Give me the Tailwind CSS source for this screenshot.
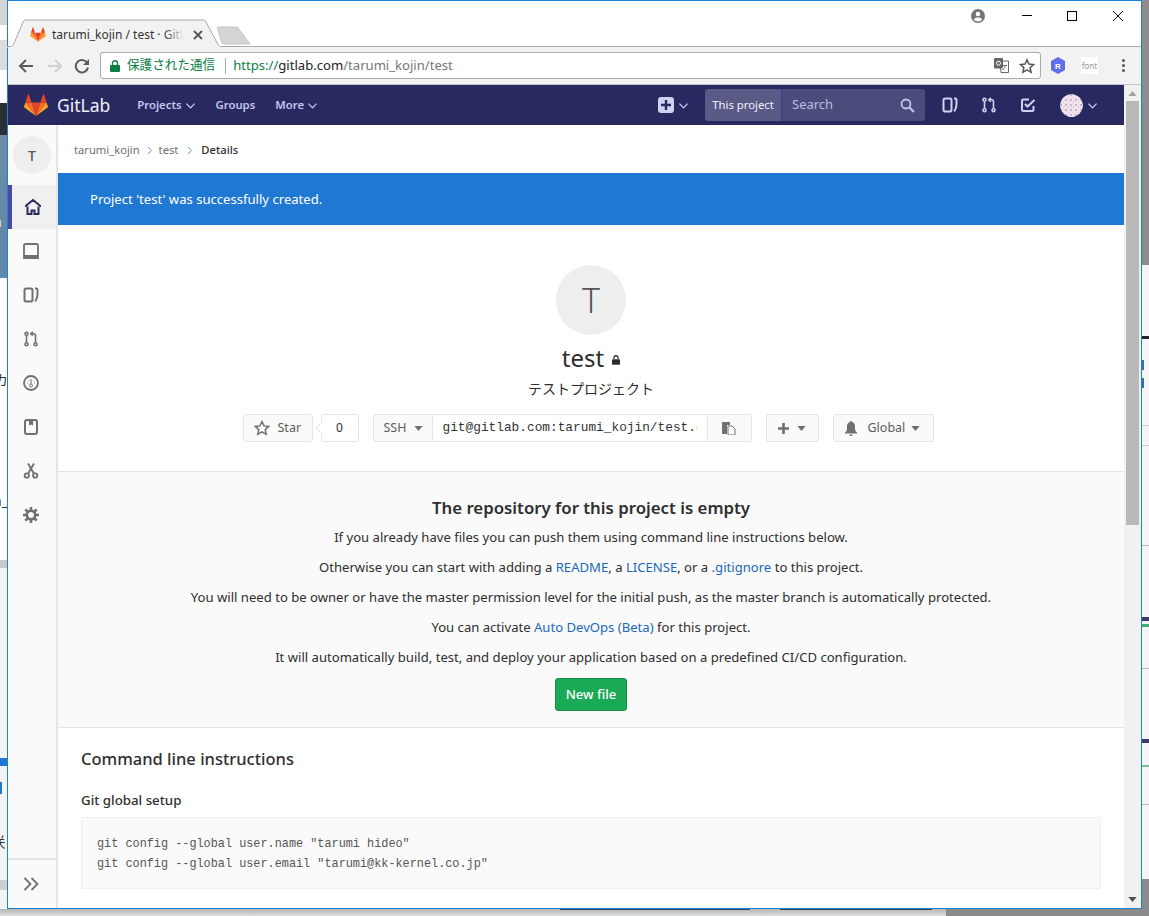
<!DOCTYPE html>
<html lang="ja">
<head>
    <meta charset="UTF-8">
    <title>tarumi_kojin / test · GitLab</title>
    <script src="https://cdn.jsdelivr.net/npm/@tailwindcss/browser@4"></script>
</head>
<body class="font-['Noto_Sans','Noto_Sans_CJK_JP',sans-serif] text-[#2e2e2e]">
    <svg class="hidden">
        <symbol id="i-boards" viewBox="0 0 16 16"><rect x="1.5" y="1.5" width="8" height="13" rx="1.8" fill="none" stroke="currentColor" stroke-width="2"/><path d="M12 1.5h1.2c.8 0 1.3.5 1.3 1.2v4.5c0 3-.8 5.2-2.3 7.3" fill="none" stroke="currentColor" stroke-width="2"/></symbol>
        <symbol id="i-merge" viewBox="0 0 16 16"><g fill="none" stroke="currentColor" stroke-width="1.6"><circle cx="3.5" cy="2.8" r="1.5"/><circle cx="3.5" cy="13.2" r="1.5"/><circle cx="12.5" cy="13.2" r="1.5"/><path d="M3.5 4.5v7M12.5 11.5V4.5c0-1-.6-1.7-1.6-1.7H8"/><path d="M9.8.8 7.8 2.8l2 2"/></g></symbol>
        <symbol id="i-todo" viewBox="0 0 16 16"><path d="M13.5 9v3.5c0 1-.6 1.5-1.5 1.5H3.5C2.6 14 2 13.500 2 12.500V4c0-1 .6-1.500 1.500-1.500H9" fill="none" stroke="currentColor" stroke-width="2"/><path d="m5 7 2.500 2.500L14.500 3" fill="none" stroke="currentColor" stroke-width="2"/></symbol>
        <symbol id="i-chev" viewBox="0 0 12 12"><path d="m1.500 4 4.500 4.500L10.500 4" fill="none" stroke="currentColor" stroke-width="1.300"/></symbol>
        <symbol id="i-caret" viewBox="0 0 10 6"><path d="M0 0h10L5 6z" fill="currentColor"/></symbol>
        <symbol id="i-tanuki" viewBox="0 0 24 22"><path d="M12 22 16.400 8.500H7.600z" fill="#e24329"/><path d="M12 22 7.600 8.500H1.400z" fill="#fc6d26"/><path d="M1.400 8.500.1 12.600c-.1.400 0 .8.300 1L12 22z" fill="#fca326"/><path d="M1.400 8.500h6.200L4.900.4c-.1-.4-.7-.4-.9 0z" fill="#e24329"/><path d="M12 22l4.400-13.500h6.200z" fill="#fc6d26"/><path d="m22.600 8.500 1.300 4.100c.1.400 0 .8-.3 1L12 22z" fill="#fca326"/><path d="M22.600 8.500h-6.200L19.100.4c.1-.4.7-.4.9 0z" fill="#e24329"/></symbol>
    </svg>

    <div class="relative w-[1149px] h-[916px] overflow-hidden bg-[#e8e8e8]">
        <!-- 背景の別ウィンドウ（左） -->
        <div class="absolute left-0 top-0 w-[8px] h-[916px] bg-white overflow-hidden text-[14px] leading-none text-[#333]">
            <div class="absolute left-0 top-0 w-full h-[25px] bg-[#d4d4d4]"></div>
            <div class="absolute left-0 top-[40px] w-full h-[30px] bg-[#dcdcdc]"></div>
            <div class="absolute left-0 top-[103px] w-full h-[32px] bg-[#2b2f33]"></div>
            <div class="absolute left-0 top-[135px] w-full h-[143px] bg-gradient-to-b from-[#6f8ba3] to-[#5f88aa]"></div>
            <div class="absolute left-0 top-[560px] w-full h-[8px] bg-[#c9c9c9]"></div>
            <div class="absolute left-0 top-[568px] w-full h-[340px] bg-[#f4f4f4]"></div>
            <div class="absolute left-0 top-[758px] w-full h-[8px] bg-[#1f78d1]"></div>
            <div class="absolute left-0 top-[782px] w-[2px] h-[12px] bg-[#1f78d1]"></div>
            <div class="absolute left-0 top-[880px] w-full h-[10px] bg-[#cfcfcf]"></div>
            <span class="absolute left-[-7px] top-[215px] text-white">n</span>
            <span class="absolute left-[-6px] top-[373px]">カ</span>
            <span class="absolute left-[-7px] top-[494px]">n_</span>
            <span class="absolute left-[-7px] top-[835px]">关</span>
        </div>
        <!-- 背景の別ウィンドウ（右） -->
        <div class="absolute left-[1142px] top-0 w-[7px] h-[916px] bg-[#f4f4f4] overflow-hidden">
            <div class="absolute left-0 top-0 w-full h-[265px] bg-[#8c8c8c]"></div>
            <div class="absolute left-0 top-[336px] w-full h-[3px] bg-[#222]"></div>
            <div class="absolute left-0 top-[360px] w-[2px] h-[10px] bg-[#3a6ea5]"></div>
            <div class="absolute left-0 top-[378px] w-[2px] h-[10px] bg-[#3a6ea5]"></div>
            <div class="absolute left-0 top-[425px] w-full h-px bg-[#ccc]"></div>
            <div class="absolute left-0 top-[445px] w-full h-px bg-[#ccc]"></div>
            <div class="absolute left-0 top-[545px] w-full h-px bg-[#bbb]"></div>
            <div class="absolute left-0 top-[617px] w-full h-[4px] bg-[#3b3b6d]"></div>
            <div class="absolute left-0 top-[624px] w-full h-[3px] bg-[#3fae6a]"></div>
            <div class="absolute left-0 top-[668px] w-full h-px bg-[#bbb]"></div>
            <div class="absolute left-0 top-[739px] w-full h-[4px] bg-[#3b3b6d]"></div>
            <div class="absolute left-0 top-[765px] w-full h-[2px] bg-[#6fc48f]"></div>
            <div class="absolute left-0 top-[804px] w-full h-px bg-[#bbb]"></div>
            <div class="absolute left-0 top-[879px] w-full h-[37px] bg-[#8a8a8a]"></div>
        </div>
        <!-- 下端 -->
        <div class="absolute left-0 top-[909px] w-[946px] h-[7px] bg-gradient-to-b from-[#b5b5b5] to-[#dedede]"></div>
        <div class="absolute left-[946px] top-[909px] w-[203px] h-[7px] bg-[#8a8a8a]"></div>
        <div class="absolute left-[560px] top-[909px] w-[190px] h-px bg-[#33475f]"></div>
        <div class="absolute left-[780px] top-[909px] w-[152px] h-px bg-[#3c4450]"></div>

        <!-- Chrome ウィンドウ -->
        <div class="absolute left-[7px] top-0 w-[1135px] h-[909px] border border-[#1883d7] bg-white flex flex-col">
            <!-- タイトルバー -->
            <div class="relative h-[46px] shrink-0 bg-white">
                <div class="absolute left-[212px] right-0 bottom-0 h-px bg-[#aaa]"></div>
                <svg class="absolute left-[-1px] top-[18px] w-[250px] h-[29px]" viewBox="0 0 250 29">
                    <path d="M0 28H3C5 28 6 27 7 25L16 3C17 1 18 1 20 1H195C197 1 198 1 199 3L213 28.500H0z" fill="#f2f2f2"/>
                    <path d="M0 27.500H3C5 27.500 6 26.500 7 24.500L16 3C17 1 18 1 20 1H195C197 1 198 1 199 3L212 27.500" fill="none" stroke="#aaa"/>
                    <path d="M210.500 9.500C210 8.500 210.500 8 211.500 8H229C230 8 231 8.500 231.500 9.500L243 25H217C216 25 215.500 24.500 215 24z" fill="#d4d4d4" stroke="#c4c4c4"/>
                </svg>
                <svg class="absolute left-[22px] top-[26px] w-[16px] h-[15px]"><use href="#i-tanuki"/></svg>
                <div class="absolute left-[44px] top-[26px] w-[132px] h-[16px] overflow-hidden whitespace-nowrap text-[12px] leading-[16px] text-[#333]">tarumi_kojin / test · GitLab</div>
                <div class="absolute left-[156px] top-[26px] w-[20px] h-[16px] bg-gradient-to-r from-transparent to-[#f2f2f2]"></div>
                <svg class="absolute left-[185px] top-[29px] w-[10px] h-[10px]" viewBox="0 0 10 10"><path d="m1 1 8 8M9 1l-8 8" stroke="#555" stroke-width="1.800"/></svg>
                <svg class="absolute left-[963px] top-[8px] w-[14px] h-[14px]" viewBox="0 0 14 14"><circle cx="7" cy="7" r="7" fill="#757575"/><circle cx="7" cy="5" r="2.300" fill="#fff"/><path d="M2.800 10.800C3.500 9 5 8.500 7 8.500s3.500.5 4.200 2.300C10 12 8.500 12.500 7 12.500s-3-.5-4.200-1.700z" fill="#fff"/></svg>
                <div class="absolute left-[1014px] top-[14px] w-[10px] h-px bg-black"></div>
                <div class="absolute left-[1059px] top-[10px] w-[10px] h-[10px] border border-black"></div>
                <svg class="absolute left-[1105px] top-[10px] w-[10px] h-[10px]" viewBox="0 0 10 10"><path d="m0 0 10 10M10 0 0 10" stroke="#000"/></svg>
            </div>
            <!-- ツールバー -->
            <div class="h-[38px] shrink-0 bg-[#f2f2f2] flex items-center pl-[10px] pr-[16px] border-b border-[#c4c4c4]">
                <svg class="w-[16px] h-[16px]" viewBox="0 0 16 16"><path d="M15 8H2M8 2 2 8l6 6" fill="none" stroke="#5a5a5a" stroke-width="2"/></svg>
                <svg class="w-[16px] h-[16px] ml-[13px]" viewBox="0 0 16 16"><path d="M1 8h13M8 2l6 6-6 6" fill="none" stroke="#d0d0d0" stroke-width="2"/></svg>
                <svg class="w-[16px] h-[16px] ml-[11px]" viewBox="0 0 16 16"><path d="M13.500 5.500A6.200 6.200 0 1 0 14 9.500" fill="none" stroke="#5a5a5a" stroke-width="2"/><path d="M15 1v6H9z" fill="#5a5a5a"/></svg>
                <div class="ml-[10px] w-[941px] h-[27px] bg-white border border-[#aaa] rounded-[3px] flex items-center pl-[9px] pr-[5px] text-[13.100px]">
                    <svg class="w-[10px] h-[12px]" viewBox="0 0 10 12"><path d="M2.500 5V3.200a2.500 2.500 0 0 1 5 0V5" fill="none" stroke="#0b8043" stroke-width="1.400"/><rect y="5" width="10" height="7" rx="1" fill="#0b8043"/></svg>
                    <span class="ml-[7px] text-[#0b8043] text-[12.600px]">保護された通信</span>
                    <span class="ml-[10px] w-px h-[16px] bg-[#aaa]"></span>
                    <span class="ml-[7px] text-[#0b8043]">https://</span><span class="text-[#222]">gitlab.com</span><span class="text-[#777]">/tarumi_kojin/test</span>
                    <svg class="ml-auto w-[15px] h-[15px]" viewBox="0 0 15 15"><path d="M6 3h8.500v11.500H7z" fill="#fff" stroke="#666"/><rect y="0" width="9" height="10.500" rx="1" fill="#666"/><circle cx="4.500" cy="5.200" r="2" fill="none" stroke="#fff"/><path d="M9 7.500h4M11 7v1.500c0 1.500-1 2.500-2.500 3" fill="none" stroke="#666"/></svg>
                    <svg class="ml-[10px] w-[16px] h-[16px]" viewBox="0 0 16 16"><path d="m8 1.800 1.900 4.300 4.600.5-3.400 3.100 1 4.600L8 11.900l-4.100 2.400 1-4.700-3.400-3.100 4.600-.5z" fill="none" stroke="#555" stroke-width="1.500"/></svg>
                </div>
                <svg class="ml-[9px] w-[16px] h-[17px]" viewBox="0 0 16 17"><path d="M8 0 15 4v9l-7 4-7-4V4z" fill="#5f6fe6"/><text x="8" y="11.500" font-size="8" font-weight="700" text-anchor="middle" fill="#fff" font-family="Liberation Sans, sans-serif">R</text></svg>
                <span class="ml-[15px] w-[17px] h-[17px] bg-white text-[8px] leading-[17px] text-[#999] text-center">font</span>
                <span class="ml-auto flex flex-col gap-[2px]">
                    <span class="w-[3px] h-[3px] rounded-full bg-[#555]"></span>
                    <span class="w-[3px] h-[3px] rounded-full bg-[#555]"></span>
                    <span class="w-[3px] h-[3px] rounded-full bg-[#555]"></span>
                </span>
            </div>
            <!-- ページ -->
            <div class="flex-1 min-h-0 flex">
                <div class="w-[1116px] flex flex-col min-h-0">
                    <!-- GitLab ナビ -->
                    <nav class="h-[40px] shrink-0 bg-[#292961] flex items-center pl-[16px] text-[#c5c5ec] text-[11.300px] font-semibold">
                        <svg class="w-[24px] h-[22px]"><use href="#i-tanuki"/></svg>
                        <span class="ml-[9px] text-[17.500px] font-normal text-[#f0f0fa]">GitLab</span>
                        <span class="ml-[27px] flex items-center gap-[3px]">Projects<svg class="w-[11px] h-[11px]"><use href="#i-chev"/></svg></span>
                        <span class="ml-[20px]">Groups</span>
                        <span class="ml-[20px] flex items-center gap-[3px]">More<svg class="w-[11px] h-[11px]"><use href="#i-chev"/></svg></span>
                        <div class="ml-auto flex items-center pr-[26px]">
                            <span class="w-[16px] h-[16px] rounded-[3px] bg-[#d1d1f0] flex items-center justify-center"><svg class="w-[10px] h-[10px]" viewBox="0 0 10 10"><path d="M5 0v10M0 5h10" stroke="#292961" stroke-width="2.400"/></svg></span>
                            <svg class="ml-[4px] w-[11px] h-[11px]"><use href="#i-chev"/></svg>
                            <div class="ml-[16px] w-[220px] h-[32px] rounded-[3px] overflow-hidden flex font-normal">
                                <span class="w-[77px] bg-[#5a5a87] text-[#f0f0fa] text-[11.300px] leading-[32px] text-center border-r border-[#3f3f90]">This project</span>
                                <span class="flex-1 bg-[#4b4b7c] flex items-center justify-between px-[10px] text-[#bdbde0] text-[13px]">Search
                                    <svg class="w-[15px] h-[15px]" viewBox="0 0 15 15"><circle cx="6" cy="6" r="4.500" fill="none" stroke="#c5c5ec" stroke-width="1.800"/><path d="m9.500 9.500 4.500 4.500" stroke="#c5c5ec" stroke-width="2.200"/></svg>
                                </span>
                            </div>
                            <svg class="ml-[17px] w-[16px] h-[16px] text-[#d1d1f0]"><use href="#i-boards"/></svg>
                            <svg class="ml-[23px] w-[16px] h-[16px] text-[#d1d1f0]"><use href="#i-merge"/></svg>
                            <svg class="ml-[23px] w-[16px] h-[16px] text-[#d1d1f0]"><use href="#i-todo"/></svg>
                            <svg class="ml-[24px] w-[23px] h-[23px] rounded-full" viewBox="0 0 23 23">
                                <defs><pattern id="identicon" width="5" height="5" patternUnits="userSpaceOnUse"><rect width="5" height="5" fill="#eee2ec"/><rect width="2" height="2" fill="#cfb2ce"/><rect x="3" y="3" width="1" height="1" fill="#d9c2d8"/></pattern></defs>
                                <circle cx="11.500" cy="11.500" r="11.500" fill="url(#identicon)"/>
                            </svg>
                            <svg class="ml-[4px] w-[11px] h-[11px]"><use href="#i-chev"/></svg>
                        </div>
                    </nav>
                    <div class="flex-1 min-h-0 flex overflow-hidden">
                        <!-- サイドバー -->
                        <aside class="w-[50px] shrink-0 bg-[#fafafa] border-r-2 border-[#e5e5e5] flex flex-col text-[#707070]">
                            <div class="h-[60px] flex items-center justify-center">
                                <span class="w-[38px] h-[38px] rounded-full bg-[#eeeeee] text-[#555] text-[14px] font-medium flex items-center justify-center">T</span>
                            </div>
                            <div class="h-[44px] bg-[#f0f0f0] border-l-4 border-[#4b4ba3] flex items-center justify-center pr-[2px] text-[#292961]">
                                <svg class="w-[16px] h-[16px]" viewBox="0 0 16 16"><path d="M0 7.500 8 1l8 6.500M2.500 7.500V15h4v-3.500h3V15h4V7.500" fill="none" stroke="currentColor" stroke-width="2"/></svg>
                            </div>
                            <div class="h-[44px] pr-[2px] flex items-center justify-center">
                                <svg class="w-[16px] h-[16px]" viewBox="0 0 16 16"><path d="M2.500 1h11c.8 0 1.500.7 1.500 1.500V15H1V2.500C1 1.700 1.700 1 2.500 1z" fill="none" stroke="currentColor" stroke-width="1.800"/><rect x="1" y="12" width="14" height="3" fill="currentColor"/></svg>
                            </div>
                            <div class="h-[44px] pr-[2px] flex items-center justify-center"><svg class="w-[16px] h-[16px]"><use href="#i-boards"/></svg></div>
                            <div class="h-[44px] pr-[2px] flex items-center justify-center"><svg class="w-[16px] h-[16px]"><use href="#i-merge"/></svg></div>
                            <div class="h-[44px] pr-[2px] flex items-center justify-center">
                                <svg class="w-[16px] h-[16px]" viewBox="0 0 16 16"><circle cx="8" cy="8" r="7" fill="none" stroke="currentColor" stroke-width="1.800"/><circle cx="8" cy="10.500" r="1.500" fill="none" stroke="currentColor"/><path d="M8 4v5M4 8h.8M11.200 8h.8M5.200 5.200l.5.500M10.800 5.200l-.5.500" stroke="currentColor"/></svg>
                            </div>
                            <div class="h-[44px] pr-[2px] flex items-center justify-center">
                                <svg class="w-[16px] h-[16px]" viewBox="0 0 16 16"><rect x="2" y="1" width="12" height="14" rx="2" fill="none" stroke="currentColor" stroke-width="2"/><path d="M6 1h4v5.500L8 5.500l-2 1z" fill="currentColor"/></svg>
                            </div>
                            <div class="h-[44px] pr-[2px] flex items-center justify-center">
                                <svg class="w-[16px] h-[16px]" viewBox="0 0 16 16"><g fill="none" stroke="currentColor" stroke-width="1.800"><circle cx="3.800" cy="12.500" r="2.200"/><circle cx="12.200" cy="12.500" r="2.200"/><path d="M5 10.800 11 .5M11 10.800 5 .5"/></g></svg>
                            </div>
                            <div class="h-[44px] pr-[2px] flex items-center justify-center">
                                <svg class="w-[16px] h-[16px]" viewBox="0 0 16 16"><circle cx="8" cy="8" r="4.200" fill="none" stroke="currentColor" stroke-width="2.600"/><path d="M8 0v3M8 13v3M0 8h3M13 8h3M2.300 2.300l2.200 2.200M11.500 11.500l2.200 2.200M13.700 2.300l-2.200 2.200M4.500 11.500l-2.200 2.200" stroke="currentColor" stroke-width="2.600"/></svg>
                            </div>
                            <div class="mt-auto h-[50px] border-t-2 border-[#e5e5e5] flex items-center justify-center pr-[2px]">
                                <svg class="w-[16px] h-[14px]" viewBox="0 0 16 14"><path d="m1.500 1 6 6-6 6M8.500 1l6 6-6 6" fill="none" stroke="currentColor" stroke-width="1.800"/></svg>
                            </div>
                        </aside>
                        <!-- メイン -->
                        <main class="flex-1 min-w-0 overflow-hidden text-[13.100px]">
                            <div class="h-[48px] pt-[2px] mx-[16px] flex items-center text-[11.200px] text-[#707070]">
                                tarumi_kojin
                                <svg class="mx-[5px] w-[9px] h-[9px] -rotate-90 text-[#888]"><use href="#i-chev"/></svg>
                                test
                                <svg class="mx-[7px] w-[9px] h-[9px] -rotate-90 text-[#888]"><use href="#i-chev"/></svg>
                                <span class="text-[#2e2e2e] font-medium">Details</span>
                            </div>
                            <div class="h-[52px] bg-[#1f78d1] text-white pl-[32px] leading-[52px]">Project 'test' was successfully created.</div>
                            <section class="h-[247px] pt-[40px] flex flex-col items-center border-b border-[#e5e5e5]">
                                <span class="w-[70px] h-[70px] rounded-full bg-[#eeeeee] text-[#555] text-[34px] font-light flex items-center justify-center">T</span>
                                <div class="mt-[8px] h-[30px] flex items-center text-[24px] leading-[30px]">test<svg class="ml-[8px] mt-[4px] w-[8px] h-[10px]" viewBox="0 0 10 12"><path d="M2.500 5V3.200a2.500 2.500 0 0 1 5 0V5" fill="none" stroke="#2e2e2e" stroke-width="1.600"/><rect y="5" width="10" height="7" rx="1" fill="#2e2e2e"/></svg></div>
                                <p class="mt-[3px] h-[26px] leading-[26px] text-[14px]">テストプロジェクト</p>
                                <div class="mt-[12px] mr-[6px] h-[28px] flex items-center text-[12.500px] text-[#5c5c5c]">
                                    <span class="h-[28px] w-[70px] bg-[#fafafa] border border-[#e5e5e5] rounded-[3px] flex items-center pl-[10px]">
                                        <svg class="w-[16px] h-[16px]" viewBox="0 0 16 16"><path d="m8 1.500 2 4.400 4.700.5-3.500 3.200 1 4.700L8 11.900l-4.200 2.400 1-4.700L1.300 6.400 6 5.900z" fill="none" stroke="#707070" stroke-width="1.500"/></svg>
                                        <span class="ml-[8px]">Star</span>
                                    </span>
                                    <span class="relative ml-[8px] h-[28px] w-[38px] bg-white border border-[#e5e5e5] rounded-[3px] text-center leading-[26px] text-[12px] text-[#2e2e2e]">0<span class="absolute left-[-5px] top-[9px] w-[8px] h-[8px] bg-white border-l border-b border-[#e5e5e5] rotate-45"></span></span>
                                    <span class="ml-[14px] h-[28px] w-[60px] bg-[#fafafa] border border-[#e5e5e5] rounded-l-[3px] flex items-center pl-[10px]">SSH<svg class="ml-[7px] w-[9px] h-[5px] text-[#707070]"><use href="#i-caret"/></svg></span>
                                    <span class="h-[28px] w-[274px] bg-white border-y border-[#e5e5e5] pl-[10px]">
                                        <span class="block w-[254px] overflow-hidden whitespace-nowrap font-['Liberation_Mono',monospace] text-[12.800px] leading-[26px] text-[#333]">git@gitlab.com:tarumi_kojin/test.git</span>
                                    </span>
                                    <span class="h-[28px] w-[45px] bg-[#fafafa] border border-[#e5e5e5] rounded-r-[3px] flex items-center justify-center">
                                        <svg class="w-[14px] h-[14px]" viewBox="0 0 14 14"><path d="M0 1h8v3H5v9H0z" fill="#707070"/><path d="M6 5h4l3 3v6H6z" fill="#fff" stroke="#707070"/></svg>
                                    </span>
                                    <span class="ml-[14px] h-[28px] w-[53px] bg-[#fafafa] border border-[#e5e5e5] rounded-[3px] flex items-center justify-center gap-[8px]">
                                        <svg class="w-[11px] h-[11px]" viewBox="0 0 11 11"><path d="M5.500 0v11M0 5.500h11" stroke="#707070" stroke-width="2.600"/></svg>
                                        <svg class="w-[9px] h-[5px] text-[#707070]"><use href="#i-caret"/></svg>
                                    </span>
                                    <span class="ml-[14px] h-[28px] w-[101px] bg-[#fafafa] border border-[#e5e5e5] rounded-[3px] flex items-center pl-[10px]">
                                        <svg class="w-[14px] h-[15px]" viewBox="0 0 14 15"><path d="M7 0c.7 0 1 .5 1 1 2 .5 3 2 3 4v3c0 1.500.8 2.500 2 3.500v1H1v-1C2.200 10.500 3 9.500 3 8V5c0-2 1-3.500 3-4 0-.5.300-1 1-1zM5.500 13.500h3c0 1-.7 1.500-1.500 1.500s-1.500-.5-1.500-1.500z" fill="#707070"/></svg>
                                        <span class="ml-[10px]">Global</span>
                                        <svg class="ml-[6px] w-[9px] h-[5px] text-[#707070]"><use href="#i-caret"/></svg>
                                    </span>
                                </div>
                            </section>
                            <section class="h-[256px] bg-[#fafafa] border-b border-[#e5e5e5] flex flex-col items-center pt-[23px]">
                                <h4 class="text-[16.800px] font-semibold leading-[26px] text-[#2e2e2e]">The repository for this project is empty</h4>
                                <p class="mt-px leading-[30px]">If you already have files you can push them using command line instructions below.</p>
                                <p class="leading-[30px]">Otherwise you can start with adding a <span class="text-[#1b69b6]">README</span>, a <span class="text-[#1b69b6]">LICENSE</span>, or a <span class="text-[#1b69b6]">.gitignore</span> to this project.</p>
                                <p class="leading-[30px]">You will need to be owner or have the master permission level for the initial push, as the master branch is automatically protected.</p>
                                <p class="leading-[30px]">You can activate <span class="text-[#1b69b6]">Auto DevOps (Beta)</span> for this project.</p>
                                <p class="leading-[30px]">It will automatically build, test, and deploy your application based on a predefined CI/CD configuration.</p>
                                <span class="mt-[6px] w-[72px] h-[33px] rounded-[3px] bg-[#1aaa55] border border-[#168f48] text-white text-center leading-[31px] font-medium">New file</span>
                            </section>
                            <section class="px-[23px] pt-[18px]">
                                <h3 class="text-[16.500px] font-medium leading-[26px]">Command line instructions</h3>
                                <h5 class="mt-[18px] text-[13.300px] font-medium leading-[20px]">Git global setup</h5>
                                <pre class="mt-[7px] w-[1020px] h-[72px] bg-[#fafafa] border border-[#eeeeee] rounded-[2px] px-[15px] pt-[16px] font-['Liberation_Mono',monospace] text-[11.850px] leading-[20px] text-[#555]">git config --global user.name "tarumi hideo"
git config --global user.email "tarumi@kk-kernel.co.jp"</pre>
                            </section>
                        </main>
                    </div>
                </div>
                <!-- スクロールバー -->
                <div class="w-[17px] shrink-0 bg-[#f1f1f1] flex flex-col items-center">
                    <svg class="mt-[6px] w-[9px] h-[5px] text-[#a3a3a3] rotate-180"><use href="#i-caret"/></svg>
                    <div class="mt-[5px] w-[13px] h-[424px] bg-[#b9b9b9]"></div>
                    <svg class="mt-auto mb-[6px] w-[9px] h-[5px] text-[#505050]"><use href="#i-caret"/></svg>
                </div>
            </div>
        </div>
    </div>
</body>
</html>
